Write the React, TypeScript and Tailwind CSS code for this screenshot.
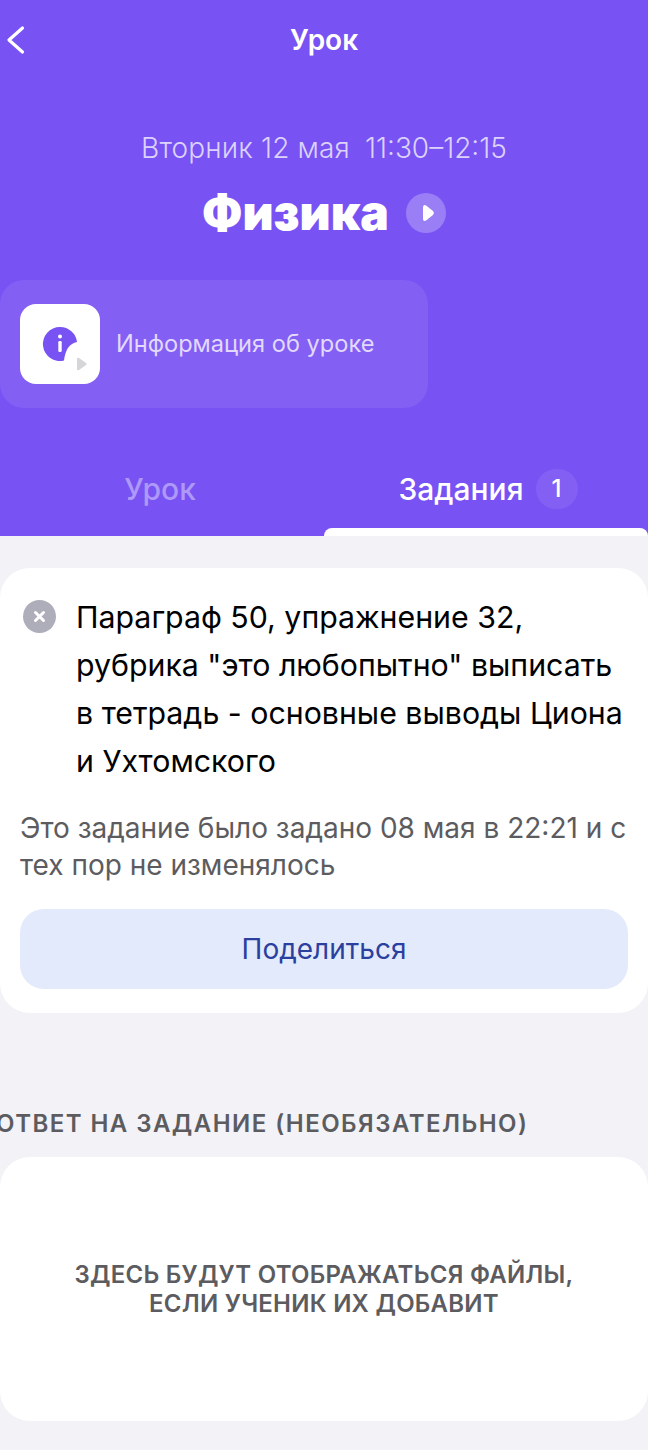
import React from 'react';

const App = () => {
  return (
    <div className="w-[648px] h-[1450px] overflow-hidden bg-[#f2f2f7] font-['Inter',sans-serif]">
      {/* Purple header */}
      <header className="h-[536px] bg-[#7852f3] flex flex-col">
        <div className="relative h-[80px] flex items-center justify-center">
          <svg className="absolute left-0 top-[20px]" width="32" height="40" viewBox="0 0 32 40">
            <path d="M22.5 8 L9 20 L22.5 32" fill="none" stroke="#fff" strokeWidth="3.2" strokeLinecap="round" strokeLinejoin="round" />
          </svg>
          <h1 className="text-[28px] leading-[34px] font-semibold text-white">Урок</h1>
        </div>

        <div className="mt-[50px] flex justify-center gap-[15px] text-[28px] leading-[36px] font-light text-[#dcd2fb]">
          <span className="tracking-[0.15px]">Вторник 12 мая</span>
          <span>11:30–12:15</span>
        </div>

        <div className="mt-[19px] h-[56px] flex items-center justify-center gap-[17px]">
          <h2 className="text-[48px] leading-[56px] font-black text-white">Физика</h2>
          <span className="w-[40px] h-[40px] rounded-full bg-[#9a7ef6] flex items-center justify-center">
            <svg className="ml-[4px]" width="14" height="18" viewBox="0 0 14 18">
              <path d="M3 3 L3 15 Q3 16.5 4.5 15.7 L11 10.5 Q12.5 9 11 7.5 L4.5 2.3 Q3 1.5 3 3 Z" fill="#fff" stroke="#fff" strokeWidth="2" strokeLinejoin="round" />
            </svg>
          </span>
        </div>

        <div className="mt-[39px] w-[428px] h-[128px] rounded-[24px] bg-[#835ff4] pl-[20px] flex items-center gap-[16px]">
          <div className="w-[80px] h-[80px] rounded-[16px] bg-white flex items-center justify-center">
            <svg width="80" height="80" viewBox="0 0 80 80">
              <path d="M40 23 A17 17 0 0 1 57 38 Q46 40 44 56.5 A17 17 0 1 1 40 23 Z" fill="#7852f3" />
              <circle cx="40" cy="32.5" r="2" fill="#fff" />
              <rect x="38.3" y="37" width="3.4" height="11" rx="1.2" fill="#fff" />
              <path d="M57 55 Q57 53 59 54 L66 59 Q67.5 60 66 61 L59 66 Q57 67 57 65 Z" fill="#d5d5da" />
            </svg>
          </div>
          <span className="text-[23.6px] leading-[30px] text-[#e2d9fc]">Информация об уроке</span>
        </div>

        <div className="flex h-[128px]">
          <div className="w-[324px] flex flex-col">
            <div className="h-[120px] pt-[42px] pr-[4px] flex items-center justify-center text-[30px] font-medium text-[#ae98f8]">Урок</div>
          </div>
          <div className="w-[324px] flex flex-col">
            <div className="h-[120px] pt-[42px] pl-[4px] flex items-center justify-center gap-[12px] text-[30px] font-medium text-white">
              <span>Задания</span>
              <span className="w-[42px] h-[40px] rounded-full bg-[#835ff4] flex items-center justify-center text-[24px]">1</span>
            </div>
            <div className="h-[8px] bg-white rounded-t-[8px]" />
          </div>
        </div>
      </header>

      {/* Task card */}
      <section className="mt-[32px] h-[445px] bg-white rounded-[30px] pt-[25px] px-[20px]">
        <div className="flex gap-[20px] pl-[3px]">
          <span className="mt-[7px] w-[33px] h-[33px] shrink-0 rounded-full bg-[#aeaeba] flex items-center justify-center">
            <svg width="13" height="13" viewBox="0 0 13 13">
              <path d="M2.5 2.5 L10.5 10.5 M10.5 2.5 L2.5 10.5" stroke="#fff" strokeWidth="3" strokeLinecap="round" />
            </svg>
          </span>
          <p className="text-[30.3px] leading-[48px] text-black">
            Параграф 50, упражнение 32, рубрика "это любопытно" выписать в тетрадь - основные выводы Циона и Ухтомского
          </p>
        </div>
        <p className="mt-[25px] text-[28px] leading-[37px] text-[#5c5c60]">
          Это задание было задано 08 мая в 22:21 и с тех пор не изменялось
        </p>
        <button className="mt-[25px] w-full h-[80px] rounded-[24px] bg-[#e2eafc] text-[28px] text-[#2b3f9f]">Поделиться</button>
      </section>

      {/* Answer */}
      <h3 className="mt-[94px] -ml-[4px] text-[24px] leading-[34px] font-semibold tracking-[1.45px] text-[#5c5c60] whitespace-nowrap">
        ОТВЕТ НА ЗАДАНИЕ (НЕОБЯЗАТЕЛЬНО)
      </h3>
      <section className="mt-[16px] h-[264px] bg-white rounded-[30px] flex items-center justify-center">
        <p className="text-center text-[24px] leading-[29px] font-semibold tracking-[0.25px] text-[#5c5c60]">
          ЗДЕСЬ БУДУТ ОТОБРАЖАТЬСЯ ФАЙЛЫ,
          <br />
          ЕСЛИ УЧЕНИК ИХ ДОБАВИТ
        </p>
      </section>
    </div>
  );
};

export default App;
